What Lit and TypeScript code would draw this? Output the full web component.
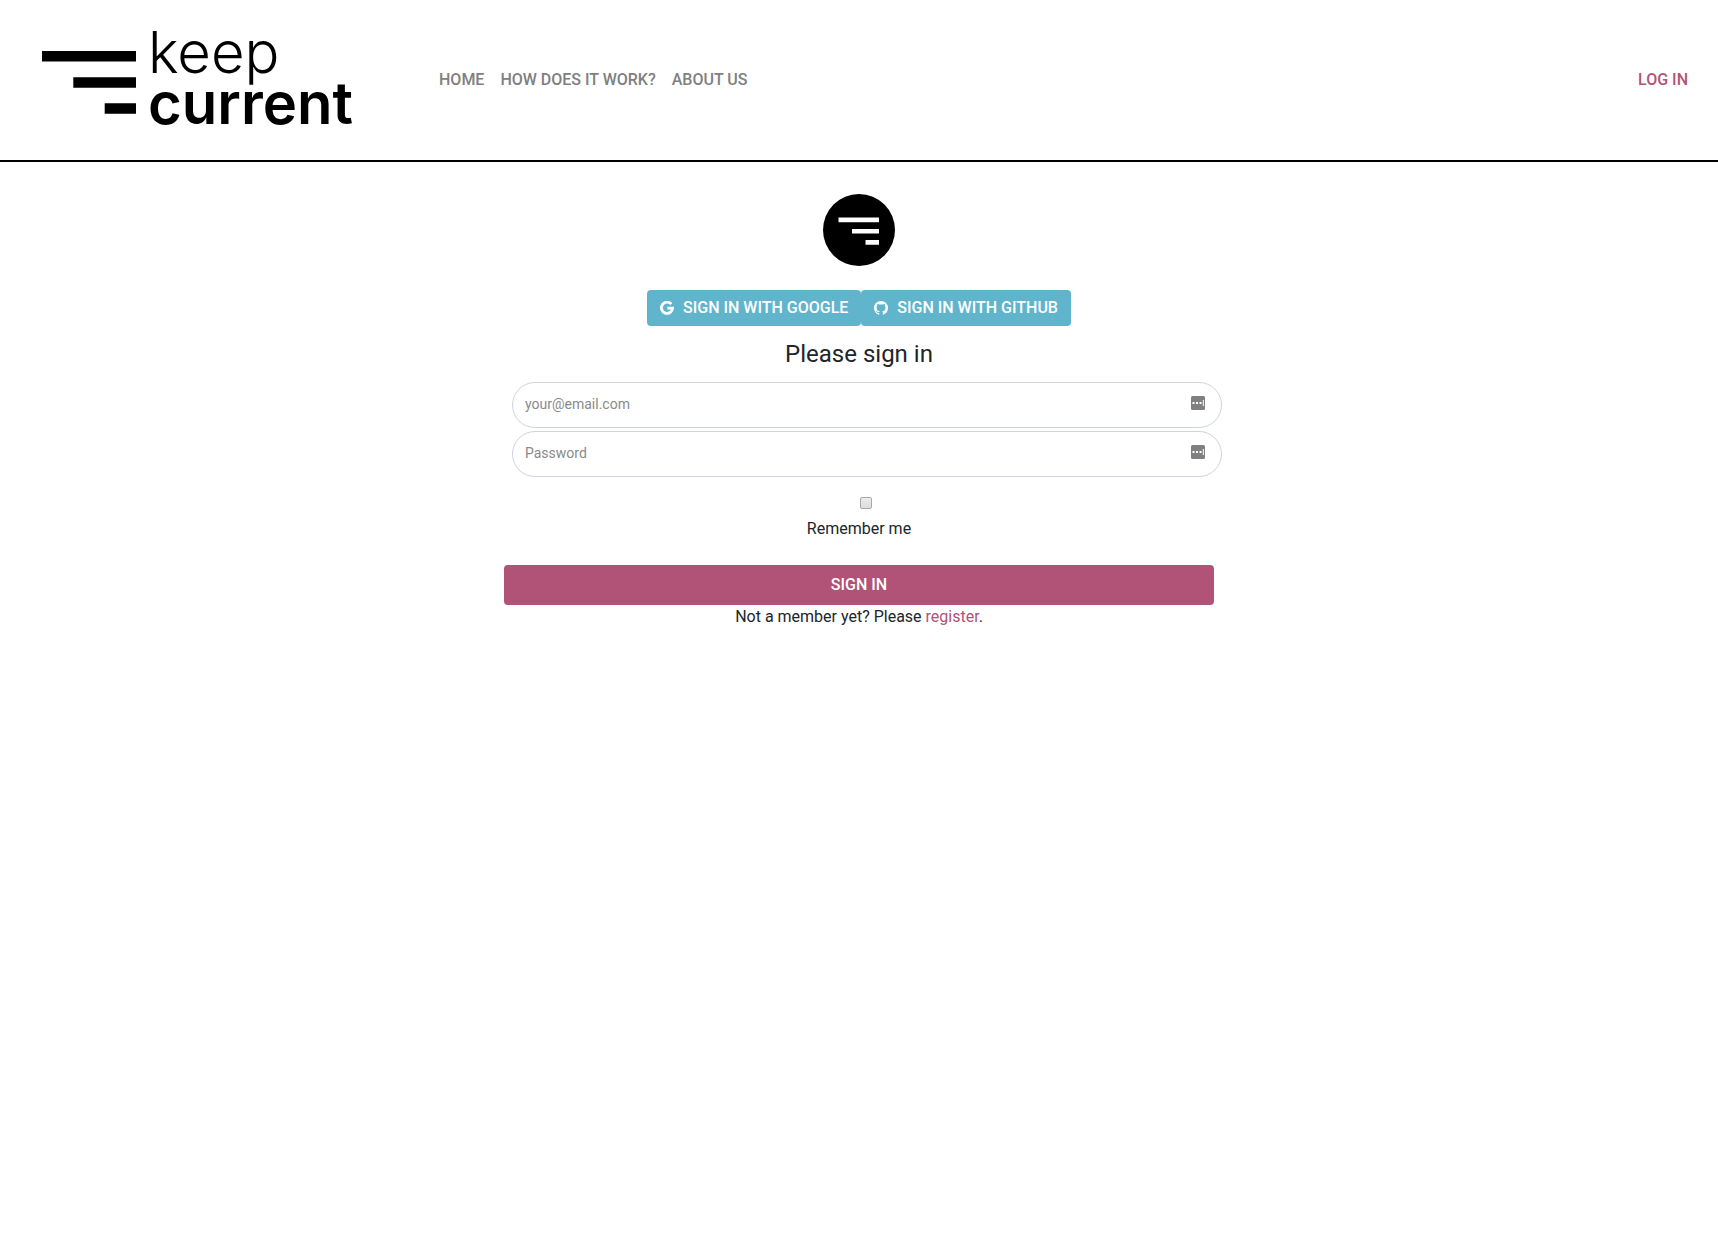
import { LitElement, html, css, svg } from "lit";
import { customElement } from "lit/decorators.js";

const NAV_LINKS = ["Home", "How does it work?", "About us"];

const googleIcon = svg`<svg class="icon" viewBox="0 0 14 14" aria-hidden="true">
  <path d="M11.300 3.200A5.600 5.600 0 1 0 12.600 7.200H7.400" fill="none" stroke="currentColor" stroke-width="2.800"/>
</svg>`;

const githubIcon = svg`<svg class="icon" viewBox="0 0 16 16" aria-hidden="true">
  <path fill="currentColor" d="M8 0C3.58 0 0 3.58 0 8c0 3.54 2.29 6.53 5.47 7.59.4.07.55-.17.55-.38 0-.19-.01-.82-.01-1.49-2.01.37-2.53-.49-2.69-.94-.09-.23-.48-.94-.82-1.13-.28-.15-.68-.52-.01-.53.63-.01 1.08.58 1.23.82.72 1.21 1.87.87 2.33.66.07-.52.28-.87.51-1.07-1.78-.2-3.64-.89-3.64-3.95 0-.87.31-1.59.82-2.15-.08-.2-.36-1.02.08-2.12 0 0 .67-.21 2.2.82.64-.18 1.32-.27 2-.27s1.36.09 2 .27c1.53-1.04 2.2-.82 2.2-.82.44 1.1.16 1.92.08 2.12.51.56.82 1.27.82 2.15 0 3.07-1.87 3.75-3.65 3.95.29.25.54.73.54 1.48 0 1.07-.01 1.93-.01 2.2 0 .21.15.46.55.38A8.01 8.01 0 0 0 16 8c0-4.42-3.58-8-8-8z"/>
</svg>`;

const managerIcon = svg`<svg class="manager" viewBox="0 0 14 14" aria-hidden="true">
  <rect width="14" height="14" rx="1.5" fill="#808080"/>
  <path fill="#fff" d="M1.5 6h2v2h-2zM5 6h2v2H5zM8.500 6h2v2h-2zM11.800 4h1v6h-1z"/>
</svg>`;

@customElement("app-root")
export class AppRoot extends LitElement {
  static styles = css`
    :host {
      display: block;
      font: 400 16px/24px Roboto, "Liberation Sans", sans-serif;
      color: #212529;
      background: #fff;
    }
    *, *::before, *::after { box-sizing: border-box; }
    a { color: #b05377; text-decoration: none; }
    .header {
      display: flex;
      align-items: center;
      height: 162px;
      padding: 0 30px 0 32px;
      border-bottom: 2px solid #000;
    }
    .brand { display: block; margin-right: 79px; }
    .logo { display: block; width: 328px; height: 120px; overflow: visible; }
    .word { font-family: Inter, "Liberation Sans", sans-serif; font-size: 58px; }
    .light { font-weight: 300; }
    .bold { font-weight: 600; }
    .nav { display: flex; flex: 1; gap: 16px; text-transform: uppercase; font-weight: 500; }
    .nav a { color: #808080; }
    .nav .login { margin-left: auto; color: #b05377; }
    .main {
      display: flex;
      flex-direction: column;
      align-items: center;
      width: 710px;
      max-width: 100%;
      margin: 0 auto;
      padding-top: 32px;
    }
    .badge { width: 72px; height: 72px; margin-bottom: 24px; }
    .providers { display: flex; }
    .btn {
      font: inherit;
      font-weight: 500;
      color: #fff;
      text-transform: uppercase;
      border: 0;
      border-radius: 4px;
      cursor: pointer;
    }
    .provider {
      display: flex;
      align-items: center;
      gap: 9px;
      height: 36px;
      padding: 0 13px;
      background: #60b5cc;
    }
    .icon { width: 14px; height: 14px; }
    .title { margin: 12px 0; font-size: 24px; line-height: 32px; font-weight: 400; }
    .form { display: flex; flex-direction: column; align-items: center; width: 100%; }
    .field {
      display: flex;
      align-items: center;
      align-self: flex-start;
      width: 100%;
      height: 46px;
      margin: 0 0 3px 8px;
      padding: 0 16px 2px 12px;
      border: 1px solid #ced4da;
      border-radius: 23px;
    }
    .input {
      flex: 1;
      min-width: 0;
      padding: 0;
      border: 0;
      outline: 0;
      background: none;
      font: inherit;
      font-size: 14px;
      color: #495057;
    }
    .input::placeholder { color: #8a8a8a; opacity: 1; }
    .manager { width: 14px; height: 14px; margin-bottom: 2px; }
    .remember {
      display: flex;
      flex-direction: column;
      align-items: center;
      margin: 17px 0 24px;
    }
    .check {
      appearance: none;
      width: 12px;
      height: 12px;
      margin: 0 0 8px 14px;
      border: 1px solid #a9a9a9;
      border-radius: 2px;
      background: linear-gradient(#ececec, #dcdcdc);
    }
    .check:checked { background: #b05377; }
    .submit { width: 100%; height: 40px; background: #b05377; }
    .note { margin: 0; }
  `;

  render() {
    return html`
      <header class="header">
        <a class="brand" href="#">
          <svg class="logo" viewBox="0 0 328 120" role="img" aria-label="keep current">
            <path d="M10 31h94v10.500H10zM41.300 57.200h62.700v10.500H41.300zM72.700 83.300h31.300v10.500H72.700z"/>
            <text class="word light" x="116" y="53">keep</text>
            <text class="word bold" x="116" y="104">current</text>
          </svg>
        </a>
        <nav class="nav">
          ${NAV_LINKS.map((label) => html`<a href="#">${label}</a>`)}
          <a class="login" href="#">Log in</a>
        </nav>
      </header>
      <main class="main">
        <svg class="badge" viewBox="0 0 72 72" aria-hidden="true">
          <circle cx="36" cy="36" r="36"/>
          <path fill="#fff" d="M15.500 23.500H56v4.800H15.500zM29 35h27v4.600H29zM42.500 46H56v4.800H42.500z"/>
        </svg>
        <div class="providers">
          <button class="btn provider" type="button">${googleIcon}Sign in with Google</button>
          <button class="btn provider" type="button">${githubIcon}Sign in with GitHub</button>
        </div>
        <h1 class="title">Please sign in</h1>
        <form class="form" @submit=${(e: Event) => e.preventDefault()}>
          <label class="field">
            <input class="input" type="email" placeholder="your@email.com" aria-label="your@email.com" />
            ${managerIcon}
          </label>
          <label class="field">
            <input class="input" type="password" placeholder="Password" aria-label="Password" />
            ${managerIcon}
          </label>
          <div class="remember">
            <input class="check" id="remember" type="checkbox" />
            <label for="remember">Remember me</label>
          </div>
          <button class="btn submit" type="submit">Sign in</button>
        </form>
        <p class="note">Not a member yet? Please <a href="#">register</a>.</p>
      </main>
    `;
  }
}
